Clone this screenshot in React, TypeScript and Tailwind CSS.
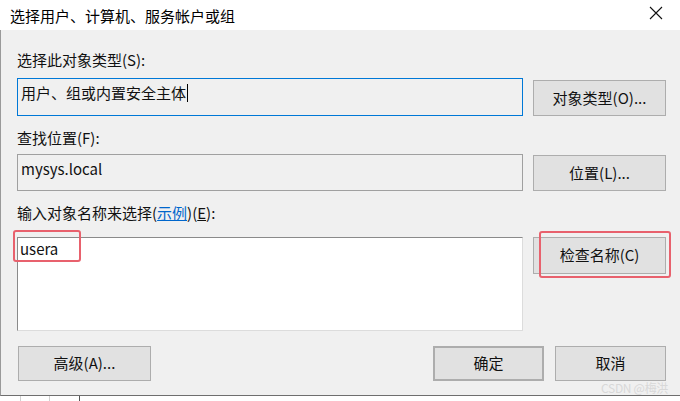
import React from 'react';

const font = { fontFamily: '"Noto Sans CJK SC", "Noto Sans", sans-serif' };

function Btn({ children, className = '' }: { children: React.ReactNode; className?: string }) {
  return (
    <div
      className={`flex items-center justify-center bg-[#e1e1e1] border border-[#adadad] text-[15px] text-[#111] ${className}`}
    >
      {children}
    </div>
  );
}

export default function App() {
  return (
    <div className="relative w-[680px] h-[401px] overflow-hidden bg-white" style={font}>
      {/* Title bar */}
      <div className="h-[30px] bg-white flex items-center justify-between pl-[10px] pr-[17px]">
        <span className="text-[15px] text-black leading-none">选择用户、计算机、服务帐户或组</span>
        <svg width="14" height="14" viewBox="0 0 14 14" className="mt-[-4px]">
          <path d="M1 1 L13 13 M13 1 L1 13" stroke="#111" strokeWidth="1.1" fill="none" />
        </svg>
      </div>

      {/* Body */}
      <div className="h-[366px] bg-[#f0f0f0] border-l border-l-[#9a9a9a] border-b border-b-[#6e6e6e] pl-[16px] pr-[14px] pt-[20px] text-[#111]">
        <div className="text-[15px] leading-[20px] h-[20px]">选择此对象类型(S):</div>
        <div className="flex items-end gap-[10px] mt-[8px]">
          <div className="w-[506px] h-[38px] border border-[#0078d7] flex items-start pt-[4px] pl-[3px] text-[15px] leading-[20px]">
            用户、组或内置安全主体
            <span className="inline-block w-px h-[18px] bg-black ml-[1px] mt-[1px]" />
          </div>
          <Btn className="w-[133px] h-[36px]">对象类型(O)...</Btn>
        </div>

        <div className="text-[15px] leading-[20px] h-[20px] mt-[12px]">查找位置(F):</div>
        <div className="flex items-end gap-[10px] mt-[6px]">
          <div className="w-[506px] h-[37px] border border-[#a0a0a0] flex items-start pt-[3px] pl-[3px] text-[15px]">
            mysys.local
          </div>
          <Btn className="w-[133px] h-[36px]">位置(L)...</Btn>
        </div>

        <div className="text-[15px] leading-[20px] h-[20px] mt-[12px]">
          输入对象名称来选择(<span className="text-[#0066cc] underline">示例</span>)(<span className="underline">E</span>):
        </div>
        <div className="flex items-start gap-[10px] mt-[14px]">
          <div className="w-[506px] h-[94px] bg-white border-t border-l border-t-[#8a8a8a] border-l-[#8a8a8a] border-r border-b border-r-[#dcdcdc] border-b-[#dcdcdc] pl-[2px] pt-[1px] text-[15px] leading-[20px]">
            usera
          </div>
          <Btn className="w-[133px] h-[37px]">检查名称(C)</Btn>
        </div>

        <div className="flex items-center mt-[15px] pl-[1px]">
          <Btn className="w-[133px] h-[35px]">高级(A)...</Btn>
          <div className="flex-1" />
          <Btn className="w-[111px] h-[35px] border-2 border-[#0078d7]">确定</Btn>
          <Btn className="w-[111px] h-[35px] ml-[11px]">取消</Btn>
        </div>
      </div>

      {/* Background window remnant */}
      <div className="h-[5px] bg-white flex text-[12px] leading-none">
        <div className="w-[20px]" />
        <div className="w-[29px] border-l border-[#d0d0d0]" />
        <div className="w-[30px] border-l border-[#d0d0d0]" />
        <div className="w-[67px] border-l border-[#555]" />
      </div>

      {/* Annotation boxes */}
      <div className="absolute left-[13px] top-[230px] w-[68px] h-[32px] border-2 border-[#e8616d] rounded-[3px]" />
      <div className="absolute left-[539px] top-[231px] w-[132px] h-[47px] border-2 border-[#e8616d] rounded-[3px]" />

      {/* Watermark */}
      <div className="absolute left-[601px] top-[382px] text-[12px] leading-none text-[#d8d8d8] tracking-tight">
        CSDN @梅洪
      </div>
    </div>
  );
}
